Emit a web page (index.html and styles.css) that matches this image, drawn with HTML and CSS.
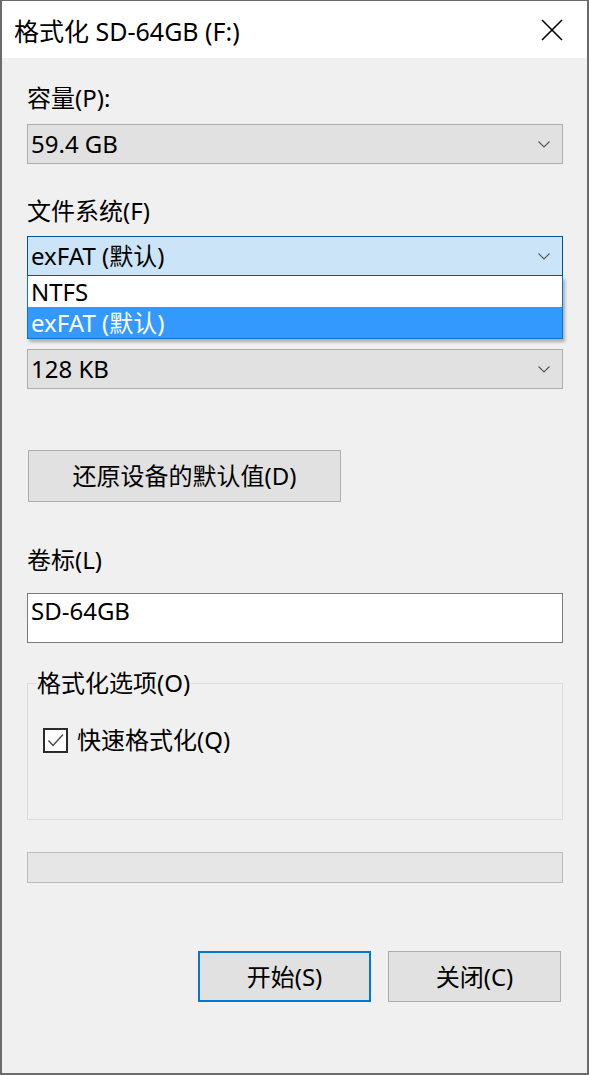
FILE: index.html
```html
<!DOCTYPE html>
<html lang="zh-CN">
<head>
<meta charset="utf-8">
<title>格式化 SD-64GB (F:)</title>
<link rel="stylesheet" href="styles.css">
</head>
<body>
<div class="window">
  <div class="titlebar">
    <span class="title">格式化 SD-64GB (F:)</span>
    <svg class="close" width="22" height="22" viewBox="0 0 22 22"><path d="M1 1 L21 21 M21 1 L1 21" stroke="#000" stroke-width="1.6" fill="none"/></svg>
  </div>
  <div class="content">
    <div class="label l1">容量(P):</div>
    <div class="select s1"><span>59.4 GB</span><svg class="chev" width="12" height="7" viewBox="0 0 12 7"><path d="M0.5 0.5 L6 6 L11.5 0.5" stroke="#555" stroke-width="1.1" fill="none"/></svg></div>

    <div class="label l2">文件系统(F)</div>
    <div class="combo">
      <div class="select focused"><span>exFAT (默认)</span><svg class="chev" width="12" height="7" viewBox="0 0 12 7"><path d="M0.5 0.5 L6 6 L11.5 0.5" stroke="#555" stroke-width="1.1" fill="none"/></svg></div>
      <div class="dropdown">
        <div class="opt">NTFS</div>
        <div class="opt sel">exFAT (默认)</div>
      </div>
    </div>

    <div class="select s3"><span>128 KB</span><svg class="chev" width="12" height="7" viewBox="0 0 12 7"><path d="M0.5 0.5 L6 6 L11.5 0.5" stroke="#555" stroke-width="1.1" fill="none"/></svg></div>

    <div class="btn restore">还原设备的默认值(D)</div>

    <div class="label l4">卷标(L)</div>
    <div class="input">SD-64GB</div>

    <fieldset class="group">
      <legend>格式化选项(O)</legend>
      <div class="check-row">
        <span class="checkbox"><svg width="21" height="21" viewBox="0 0 21 21"><path d="M3.5 10.5 L8 15.5 L18 4.5" stroke="#4a4a4a" stroke-width="1.4" fill="none"/></svg></span>
        <span class="check-label">快速格式化(Q)</span>
      </div>
    </fieldset>

    <div class="progress"></div>

    <div class="actions">
      <div class="btn primary">开始(S)</div>
      <div class="btn">关闭(C)</div>
    </div>
  </div>
</div>
</body>
</html>
```

FILE: styles.css
```css
html, body {
  margin: 0;
  padding: 0;
}
body {
  width: 589px;
  height: 1075px;
  overflow: hidden;
  background: #6f6f6f;
  font-family: "Noto Sans", "Noto Sans CJK SC", sans-serif;
  font-size: 24px;
  color: #000;
}
.window {
  box-sizing: border-box;
  width: 589px;
  height: 1075px;
  border-left: 2px solid #6b6b6b;
  border-right: 2px solid #6b6b6b;
  border-bottom: 2px solid #6b6b6b;
  border-top: 1px solid #6b6b6b;
  background: #f0f0f0;
  display: flex;
  flex-direction: column;
}
.titlebar {
  height: 57px;
  background: #fff;
  display: flex;
  align-items: center;
  justify-content: space-between;
  padding: 0 24px 0 12px;
  flex: none;
}
.title {
  font-size: 25px;
  line-height: 30px;
  margin-top: 2px;
}
.close {
  display: block;
}
.content {
  padding: 0 24px 0 25px;
  display: flex;
  flex-direction: column;
}
.label {
  line-height: 30px;
  height: 30px;
  white-space: nowrap;
}
.l1 { margin-top: 25px; }
.l2 { margin-top: 32px; }
.l4 { margin-top: 43px; }

.select {
  box-sizing: border-box;
  height: 40px;
  border: 1px solid #adadad;
  background: #e1e1e1;
  display: flex;
  align-items: center;
  justify-content: space-between;
  padding: 0 12px 0 3px;
  line-height: 30px;
}
.select span { margin-top: -1px; }
.s1 { margin-top: 11px; }
.s3 { margin-top: 73px; }
.select.focused {
  background: #cce4f7;
  border-color: #005499;
}
.combo {
  position: relative;
  margin-top: 10px;
}
.dropdown {
  position: absolute;
  left: 0;
  right: 0;
  top: 100%;
  box-sizing: border-box;
  border: 1px solid #0078d7;
  border-top: none;
  background: #fff;
  box-shadow: 2px 3px 3px rgba(0,0,0,0.28);
  z-index: 5;
}
.opt {
  height: 31px;
  line-height: 31px;
  padding-left: 3px;
}
.opt.sel {
  background: #3399ff;
  color: #fff;
}

.btn {
  box-sizing: border-box;
  border: 1px solid #adadad;
  background: #e1e1e1;
  display: flex;
  align-items: center;
  justify-content: center;
  line-height: 30px;
}
.restore {
  margin-top: 61px;
  margin-left: 1px;
  width: 313px;
  height: 52px;
}
.input {
  box-sizing: border-box;
  margin-top: 18px;
  height: 50px;
  border: 1px solid #7a7a7a;
  background: #fff;
  padding: 2px 3px;
  line-height: 30px;
}
.group {
  margin: 25px 0 0 0;
  padding: 0 0 0 15px;
  border: 1px solid #dcdcdc;
  min-width: 0;
  height: 152px;
  box-sizing: border-box;
}
.group legend {
  padding: 0 1px;
  margin-left: -7px;
  line-height: 30px;
}
.check-row {
  display: flex;
  align-items: center;
  margin-top: 27px;
  height: 30px;
}
.checkbox {
  box-sizing: border-box;
  width: 25px;
  height: 25px;
  border: 2px solid #2b2b2b;
  background: #fff;
  display: flex;
  align-items: center;
  justify-content: center;
}
.checkbox svg { display: block; }
.check-label {
  margin-left: 9px;
  line-height: 30px;
}
.progress {
  box-sizing: border-box;
  margin-top: 32px;
  height: 31px;
  border: 1px solid #bcbcbc;
  background: #e6e6e6;
}
.actions {
  display: flex;
  justify-content: flex-end;
  gap: 17px;
  margin-top: 68px;
  padding-right: 2px;
}
.actions .btn {
  width: 173px;
  height: 51px;
}
.actions .btn.primary {
  border: 2px solid #0078d7;
}
```
